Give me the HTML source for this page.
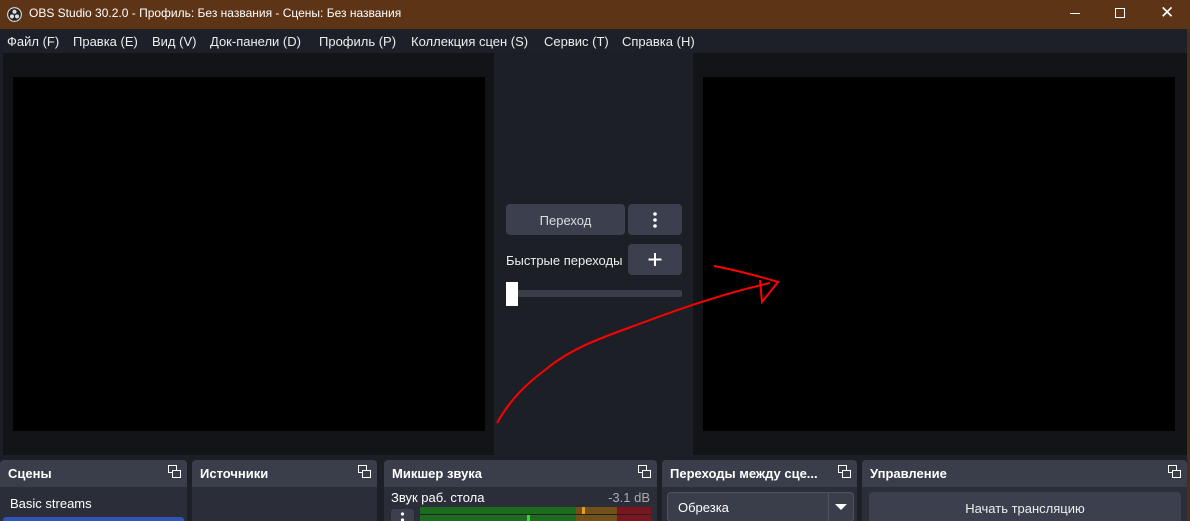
<!DOCTYPE html>
<html><head><meta charset="utf-8"><style>
*{margin:0;padding:0;box-sizing:border-box}
body{width:1190px;height:521px;overflow:hidden;background:#1d1f26;font-family:"Liberation Sans","Noto Sans CJK SC",sans-serif;color:#fff;position:relative;font-size:13px}
.abs{position:absolute}
.title{left:0;top:0;width:1190px;height:29px;background:#5e3416}
.menu{left:0;top:29px;width:1190px;height:24px;background:#1d2029}
.menu span{position:absolute;top:5px;font-size:13px;color:#eee}
.dock{position:absolute;top:460px;height:61px;background:#2b2e38;border-radius:4px 4px 0 0;overflow:hidden}
.dh{height:27px;background:#3a3d4a;font-weight:bold;font-size:13px;padding:6px 8px;position:relative}
.fl{position:absolute;right:6px;top:5px;width:13px;height:13px}
.btn{position:absolute;background:#3c3f4e;border-radius:4px;color:#ddd;text-align:center}
</style></head><body>
<div class="abs title">
<svg class="abs" style="left:7px;top:7px" width="15" height="15" viewBox="0 0 16 16"><circle cx="8" cy="8" r="7.3" fill="#222" stroke="#ddd" stroke-width="1.2"/><circle cx="8" cy="5" r="2.2" fill="#ddd"/><circle cx="5.3" cy="10" r="2.2" fill="#ddd"/><circle cx="10.7" cy="10" r="2.2" fill="#ddd"/></svg>
<span class="abs" style="left:29px;top:6px;font-size:12px;color:#fff">OBS Studio 30.2.0 - Профиль: Без названия - Сцены: Без названия</span>
<div class="abs" style="left:1070px;top:13px;width:10px;height:1px;background:#fff"></div>
<div class="abs" style="left:1115px;top:8px;width:10px;height:10px;border:1px solid #fff"></div>
<span class="abs" style="left:1160px;top:3px;font-size:17px;color:#fff">✕</span>
</div>
<div class="abs menu">
<span style="left:7px">Файл (F)</span><span style="left:73px">Правка (E)</span><span style="left:152px">Вид (V)</span><span style="left:210px">Док-панели (D)</span><span style="left:319px">Профиль (P)</span><span style="left:411px">Коллекция сцен (S)</span><span style="left:544px">Сервис (T)</span><span style="left:622px">Справка (H)</span>
</div>
<div class="abs" style="left:3px;top:53px;width:491px;height:402px;background:#131418"></div>
<div class="abs" style="left:13px;top:77px;width:472px;height:354px;background:#000"></div>
<div class="abs" style="left:693px;top:53px;width:494px;height:402px;background:#131418"></div>
<div class="abs" style="left:703px;top:77px;width:472px;height:354px;background:#000"></div>
<div class="abs" style="left:1187px;top:29px;width:3px;height:492px;background:#4a2e1a"></div>
<div class="btn" style="left:506px;top:204px;width:119px;height:31px;padding-top:9px">Переход</div>
<div class="btn" style="left:628px;top:204px;width:54px;height:31px"><svg width="54" height="31"><circle cx="27" cy="10" r="1.8" fill="#fff"/><circle cx="27" cy="16" r="1.8" fill="#fff"/><circle cx="27" cy="22" r="1.8" fill="#fff"/></svg></div>
<span class="abs" style="left:506px;top:253px;color:#eee">Быстрые переходы</span>
<div class="btn" style="left:628px;top:244px;width:54px;height:31px"><svg width="54" height="31"><path d="M27 9v13M20.5 15.5h13" stroke="#fff" stroke-width="2"/></svg></div>
<div class="abs" style="left:506px;top:290px;width:176px;height:7px;background:#3a3d4a;border-radius:2px"></div>
<div class="abs" style="left:506px;top:282px;width:12px;height:24px;background:#fff"></div>
<svg class="abs" style="left:0;top:0" width="1190" height="521"><path d="M497 423 C510 400 525 385 545 370 C575 345 610 335 650 320 C690 305 730 292 770 283 M714 266 C735 270 758 276 778 282 L762 302 L760 280" fill="none" stroke="#f00" stroke-width="2"/></svg>
<div class="dock" style="left:0;width:187px"><div class="dh">Сцены<svg class="fl" viewBox="0 0 13 13"><rect x=".5" y=".5" width="8" height="7" fill="none" stroke="#fff"/><rect x="4.5" y="5.5" width="8" height="7" fill="#3a3d4a" stroke="#fff"/></svg></div><div style="padding:9px 10px;font-size:13px">Basic streams</div><div class="abs" style="left:3px;top:57px;width:181px;height:6px;background:#2f55b8;border-radius:3px"></div></div>
<div class="dock" style="left:192px;width:185px"><div class="dh">Источники<svg class="fl" viewBox="0 0 13 13"><rect x=".5" y=".5" width="8" height="7" fill="none" stroke="#fff"/><rect x="4.5" y="5.5" width="8" height="7" fill="#3a3d4a" stroke="#fff"/></svg></div></div>
<div class="dock" style="left:384px;width:273px"><div class="dh">Микшер звука<svg class="fl" viewBox="0 0 13 13"><rect x=".5" y=".5" width="8" height="7" fill="none" stroke="#fff"/><rect x="4.5" y="5.5" width="8" height="7" fill="#3a3d4a" stroke="#fff"/></svg></div>
<span class="abs" style="left:7px;top:30px">Звук раб. стола</span><span class="abs" style="right:7px;top:30px;color:#aaa">-3.1 dB</span>
<div class="abs" style="left:7px;top:49px;width:23px;height:14px;background:#3c3f4e;border-radius:3px"><svg width="23" height="14"><circle cx="11.5" cy="5" r="1.6" fill="#fff"/><circle cx="11.5" cy="11" r="1.6" fill="#fff"/></svg></div>
<div class="abs" style="left:36px;top:47px;width:197px;height:14px;background:linear-gradient(90deg,#1c6b1e 0,#1c6b1e 156px,#72501a 156px,#72501a 197px)"></div>
<div class="abs" style="left:233px;top:47px;width:34px;height:14px;background:#7a1620"></div>
<div class="abs" style="left:36px;top:54px;width:231px;height:1px;background:#222"></div>
<div class="abs" style="left:198px;top:47px;width:3px;height:7px;background:#e0a020"></div>
<div class="abs" style="left:143px;top:55px;width:3px;height:6px;background:#3d3"></div>
</div>
<div class="dock" style="left:662px;width:195px"><div class="dh">Переходы между сце...<svg class="fl" viewBox="0 0 13 13"><rect x=".5" y=".5" width="8" height="7" fill="none" stroke="#fff"/><rect x="4.5" y="5.5" width="8" height="7" fill="#3a3d4a" stroke="#fff"/></svg></div>
<div class="abs" style="left:5px;top:32px;width:187px;height:30px;background:#3a3d4a;border:1px solid #50535f;border-radius:4px"><span class="abs" style="left:10px;top:7px">Обрезка</span><div class="abs" style="left:160px;top:0;width:1px;height:30px;background:#50535f"></div><svg class="abs" style="left:167px;top:11px" width="12" height="7"><path d="M0 0h12L6 6z" fill="#fff"/></svg></div></div>
<div class="dock" style="left:862px;width:325px"><div class="dh">Управление<svg class="fl" viewBox="0 0 13 13"><rect x=".5" y=".5" width="8" height="7" fill="none" stroke="#fff"/><rect x="4.5" y="5.5" width="8" height="7" fill="#3a3d4a" stroke="#fff"/></svg></div>
<div class="btn" style="left:7px;top:32px;width:312px;height:32px;padding-top:9px;color:#eee">Начать трансляцию</div></div>
</body></html>
